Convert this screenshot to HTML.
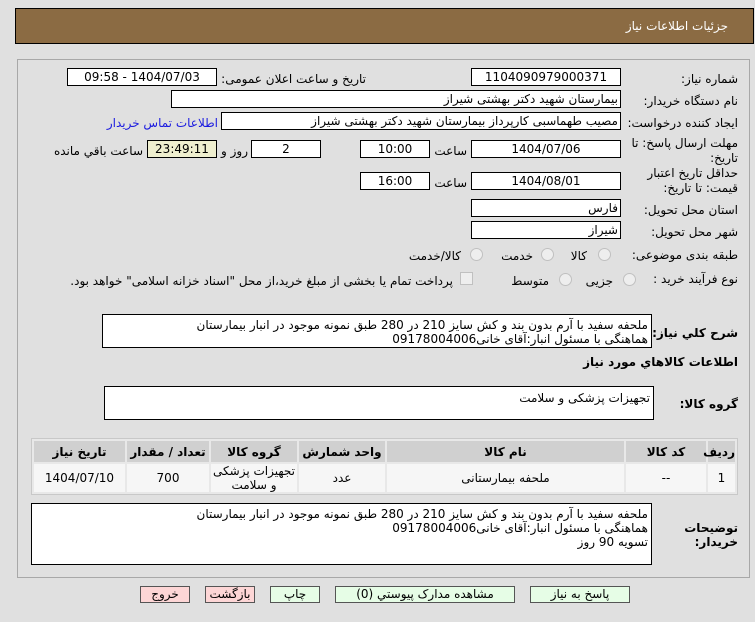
<!DOCTYPE html>
<html><head><meta charset="utf-8"><style>
body{margin:0;width:755px;height:622px;background:#e0e0e0;font-family:Tahoma,"DejaVu Sans","Noto Sans CJK SC",sans-serif;font-size:12px;color:#000;position:relative;overflow:hidden}
.a{position:absolute}
.hd{left:15px;top:8px;width:737px;height:34px;background:#8b6b43;border:1px solid #000}
.hd span{position:absolute;right:25px;top:10px;color:#fff;font-size:12px}
.pn{left:17px;top:59px;width:731px;height:517px;border:1px solid #a8a8a8}
.in{position:absolute;background:#fff;border:1px solid #000;box-sizing:border-box;height:18px;line-height:16px;padding:0 2px;direction:rtl;white-space:nowrap;overflow:hidden}
.c{text-align:center}
.l{position:absolute;direction:rtl;white-space:nowrap}
.ta{position:absolute;background:#fff;border:1px solid #000;box-sizing:border-box;direction:rtl;padding:2px 3px;line-height:19px;white-space:nowrap}
.rd{position:absolute;width:11px;height:11px;border-radius:50%;border:1px solid #c0c0c0;background:#eee}
table{position:absolute;left:31px;top:438px;width:707px;table-layout:fixed;border-collapse:separate;border-spacing:2px;border:1px solid #c8c8c8;background:#e8e8e8;direction:rtl}
th{background:#d0d0d0;height:21px;font-weight:bold;font-size:12px;padding:0}
td{background:#f6f6f6;height:28px;text-align:center;line-height:14px;padding:0}
.bt{position:absolute;top:586px;height:17px;border:1px solid #555;box-sizing:border-box;text-align:center;line-height:15px;background:#e6fde6}
.pk{background:#fdd6d6}
</style></head><body>
<div class="a hd"><span>جزئیات اطلاعات نیاز</span></div>
<div class="a pn"></div>

<div class="l" style="right:17px;top:72px">شماره نیاز:</div>
<div class="in c" style="left:471px;top:68px;width:150px">1104090979000371</div>
<div class="l" style="right:389px;top:72px">تاریخ و ساعت اعلان عمومی:</div>
<div class="in c" style="left:67px;top:68px;width:150px">1404/07/03 - 09:58</div>

<div class="l" style="right:17px;top:94px">نام دستگاه خریدار:</div>
<div class="in" style="left:171px;top:90px;width:450px">بیمارستان شهید دکتر بهشتی شیراز</div>

<div class="l" style="right:17px;top:116px">ایجاد کننده درخواست:</div>
<div class="in" style="left:221px;top:112px;width:400px">مصیب طهماسبی کارپرداز بیمارستان شهید دکتر بهشتی شیراز</div>
<div class="l" style="right:537px;top:116px;color:#1a1ae0">اطلاعات تماس خریدار</div>

<div class="l" style="right:17px;top:136px;line-height:15px;text-align:right">مهلت ارسال پاسخ: تا<br>تاریخ:</div>
<div class="in c" style="left:471px;top:140px;width:150px">1404/07/06</div>
<div class="l" style="right:288px;top:144px">ساعت</div>
<div class="in c" style="left:360px;top:140px;width:70px">10:00</div>
<div class="in c" style="left:251px;top:140px;width:70px">2</div>
<div class="l" style="right:507px;top:144px">روز و</div>
<div class="in c" style="left:147px;top:140px;width:70px;background:#efefcf">23:49:11</div>
<div class="l" style="right:612px;top:144px">ساعت باقي مانده</div>

<div class="l" style="right:17px;top:166px;line-height:15px;text-align:right">حداقل تاریخ اعتبار<br>قیمت: تا تاریخ:</div>
<div class="in c" style="left:471px;top:172px;width:150px">1404/08/01</div>
<div class="l" style="right:288px;top:176px">ساعت</div>
<div class="in c" style="left:360px;top:172px;width:70px">16:00</div>

<div class="l" style="right:17px;top:203px">استان محل تحویل:</div>
<div class="in" style="left:471px;top:199px;width:150px">فارس</div>
<div class="l" style="right:17px;top:225px">شهر محل تحویل:</div>
<div class="in" style="left:471px;top:221px;width:150px">شیراز</div>

<div class="l" style="right:17px;top:248px">طبقه بندی موضوعی:</div>
<div class="rd" style="left:598px;top:248px"></div><div class="l" style="right:168px;top:249px">کالا</div>
<div class="rd" style="left:541px;top:248px"></div><div class="l" style="right:222px;top:249px">خدمت</div>
<div class="rd" style="left:470px;top:248px"></div><div class="l" style="right:294px;top:249px">کالا/خدمت</div>

<div class="l" style="right:17px;top:272px">نوع فرآیند خرید :</div>
<div class="rd" style="left:623px;top:273px"></div><div class="l" style="right:142px;top:274px">جزیی</div>
<div class="rd" style="left:559px;top:273px"></div><div class="l" style="right:206px;top:274px">متوسط</div>
<div class="a" style="left:460px;top:272px;width:11px;height:11px;border:1px solid #c0c0c0;background:#eee"></div>
<div class="l" style="right:302px;top:274px">پرداخت تمام یا بخشی از مبلغ خرید،از محل "اسناد خزانه اسلامی" خواهد بود.</div>

<div class="l" style="right:17px;top:326px;font-weight:bold">شرح کلي نیاز:</div>
<div class="ta" style="left:102px;top:314px;width:550px;height:34px;line-height:14px;padding-top:3px">ملحفه سفید با آرم بدون بند و کش سایز 210 در 280 طبق نمونه موجود در انبار بیمارستان<br>هماهنگی با مسئول انبار:آقای خانی09178004006</div>
<div class="l" style="right:17px;top:355px;font-weight:bold">اطلاعات کالاهاي مورد نياز</div>
<div class="l" style="right:17px;top:397px;font-weight:bold">گروه کالا:</div>
<div class="ta" style="left:104px;top:386px;width:550px;height:34px">تجهیزات پزشکی و سلامت</div>

<table><colgroup><col style="width:27px"><col style="width:80px"><col style="width:237px"><col style="width:86px"><col style="width:86px"><col style="width:82px"><col></colgroup>
<tr><th>ردیف</th><th>کد کالا</th><th>نام کالا</th><th>واحد شمارش</th><th>گروه کالا</th><th>تعداد / مقدار</th><th>تاریخ نیاز</th></tr>
<tr><td>1</td><td>--</td><td>ملحفه بیمارستانی</td><td>عدد</td><td>تجهیزات پزشکی و سلامت</td><td>700</td><td>1404/07/10</td></tr></table>

<div class="l" style="right:17px;top:521px;font-weight:bold;line-height:14px;text-align:right">توضیحات<br>خریدار:</div>
<div class="ta" style="left:31px;top:503px;width:621px;height:62px;line-height:14px;padding-top:3px">ملحفه سفید با آرم بدون بند و کش سایز 210 در 280 طبق نمونه موجود در انبار بیمارستان<br>هماهنگی با مسئول انبار:آقای خانی09178004006<br>تسویه 90 روز</div>

<div class="bt" style="left:530px;width:100px">پاسخ به نیاز</div>
<div class="bt" style="left:335px;width:180px">مشاهده مدارک پیوستي (0)</div>
<div class="bt" style="left:270px;width:50px">چاپ</div>
<div class="bt pk" style="left:205px;width:50px">بازگشت</div>
<div class="bt pk" style="left:140px;width:50px">خروج</div>
</body></html>
